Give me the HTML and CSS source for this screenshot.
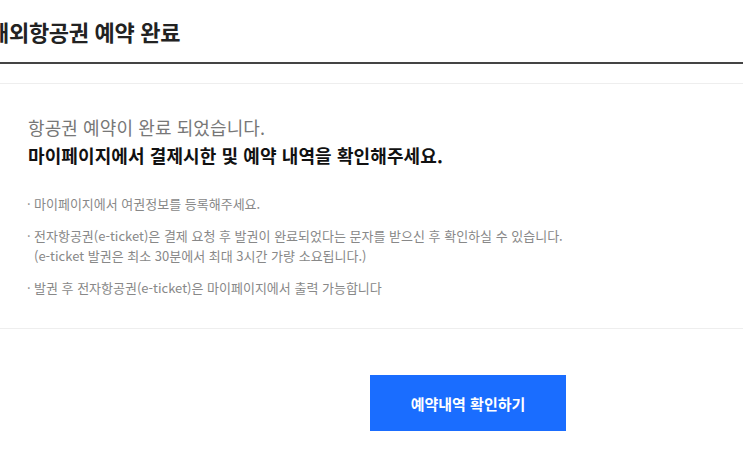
FILE: index.html
```html
<!DOCTYPE html>
<html lang="ko">

<head>
    <meta charset="UTF-8">
    <meta name="viewport" content="width=device-width, initial-scale=1.0">
    <title>해외항공권 예약 완료</title>
    <link rel="stylesheet" href="styles.css">
</head>

<body>
    <div class="page-head">
        <h1 class="page-title">해외항공권 예약 완료</h1>
    </div>

    <div class="complete-box">
        <p class="complete-msg">항공권 예약이 완료 되었습니다.</p>
        <p class="complete-strong">마이페이지에서 결제시한 및 예약 내역을 확인해주세요.</p>

        <ul class="notice-list">
            <li>마이페이지에서 여권정보를 등록해주세요.</li>
            <li>전자항공권(e-ticket)은 결제 요청 후 발권이 완료되었다는 문자를 받으신 후 확인하실 수 있습니다.<br>(e-ticket 발권은 최소 30분에서 최대 3시간 가량 소요됩니다.)</li>
            <li>발권 후 전자항공권(e-ticket)은 마이페이지에서 출력 가능합니다</li>
        </ul>
    </div>

    <div class="btn-area">
        <button class="btn-confirm">예약내역 확인하기</button>
    </div>
</body>

</html>
```

FILE: styles.css
```css
body {
    margin: 0;
    font-family: "Noto Sans CJK KR", "Noto Sans", sans-serif;
    color: #222;
    background: #fff;
    overflow: hidden;
}

.page-head {
    height: 62px;
    border-bottom: 2px solid #444;
    display: flex;
    align-items: center;
}

.page-title {
    margin: 0 0 0 -11px;
    font-size: 22px;
    font-weight: 700;
    letter-spacing: -0.3px;
    white-space: nowrap;
}

.complete-box {
    margin-top: 19px;
    border-top: 1px solid #eee;
    border-bottom: 1px solid #eee;
    padding: 29px 28px 30px;
}

.complete-msg,
.complete-strong {
    margin: 0;
    font-size: 18px;
    line-height: 28px;
    letter-spacing: 0.1px;
}

.complete-msg {
    color: #777;
}

.complete-strong {
    font-weight: 700;
    color: #111;
}

.notice-list {
    list-style: none;
    margin: 25px 0 0;
    padding: 0;
}

.notice-list li {
    position: relative;
    padding-left: 6px;
    font-size: 13px;
    line-height: 20px;
    color: #888;
}

.notice-list li + li {
    margin-top: 12px;
}

.notice-list li::before {
    content: "·";
    position: absolute;
    left: -1px;
    top: 0;
}

.btn-area {
    padding: 46px 0 0 370px;
}

.btn-confirm {
    width: 196px;
    height: 56px;
    border: 0;
    background: #1a6dff;
    color: #fff;
    font-family: inherit;
    font-size: 15px;
    font-weight: 700;
    cursor: pointer;
}
```
